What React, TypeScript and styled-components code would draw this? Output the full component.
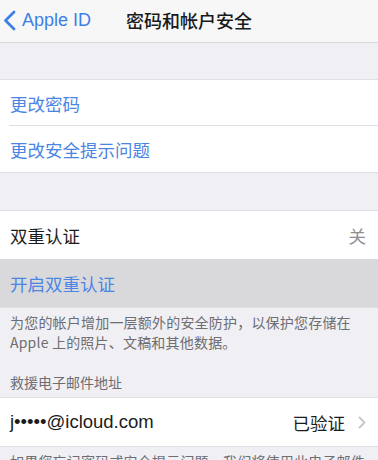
import React from "react";
import styled, { createGlobalStyle } from "styled-components";

const Global = createGlobalStyle`
  html, body { margin: 0; padding: 0; background: #efeff4; }
  body { font-family: "Liberation Sans", "Noto Sans CJK SC", sans-serif; -webkit-font-smoothing: antialiased; }
`;

const Page = styled.div`
  width: 378px;
  height: 460px;
  overflow: hidden;
  background: #efeff4;
  display: flex;
  flex-direction: column;
`;

const NavBar = styled.div`
  height: 42px;
  flex: none;
  background: #f7f7f8;
  border-bottom: 1px solid #d8d8dc;
  display: grid;
  grid-template-columns: 1fr auto 1fr;
  align-items: center;
`;

const Back = styled.div`
  display: flex;
  align-items: center;
  gap: 6px;
  padding-left: 3px;
  color: #3d7fe6;
  font-size: 18px;
  margin-top: -1px;
`;

const Title = styled.div`
  font-family: "Noto Sans CJK SC", sans-serif;
  font-size: 18px;
  font-weight: 500;
  color: #1a1a1a;
  margin-top: -2px;
`;

const Spacer = styled.div<{ h: number }>`
  height: ${(p) => p.h}px;
  flex: none;
`;

const Group = styled.div`
  background: #fff;
  border-top: 1px solid #e0e0e4;
  border-bottom: 1px solid #e0e0e4;
  display: flex;
  flex-direction: column;
  flex: none;
`;

const Row = styled.div<{ h: number; highlighted?: boolean; divider?: boolean }>`
  height: ${(p) => p.h}px;
  display: flex;
  align-items: center;
  justify-content: space-between;
  padding: 0 12px 0 10px;
  background: ${(p) => (p.highlighted ? "#d9d9db" : "#fff")};
  position: relative;
  ${(p) =>
    p.divider
      ? `&::after { content: ""; position: absolute; left: 9px; right: 0; bottom: 0; height: 1px; background: #e0e0e4; }`
      : ""}
`;

const Label = styled.span<{ blue?: boolean }>`
  font-family: "Noto Sans CJK SC", sans-serif;
  font-size: 17.5px;
  color: ${(p) => (p.blue ? "#4a85e4" : "#1c1c1c")};
`;

const Email = styled.span`
  font-family: "Liberation Sans", "Noto Sans CJK SC", sans-serif;
  font-size: 18.5px;
  color: #1c1c1c;
`;

const Value = styled.span<{ light?: boolean }>`
  display: flex;
  align-items: center;
  gap: 13px;
  font-family: "Noto Sans CJK SC", sans-serif;
  font-size: 17.5px;
  color: ${(p) => (p.light ? "#8e8e93" : "#1c1c1c")};
`;

const Footer = styled.div`
  padding: 4px 12px 0 10px;
  font-family: "Noto Sans CJK SC", sans-serif;
  font-size: 14px;
  line-height: 20px;
  color: #6d6d72;
  letter-spacing: 0.2px;
  flex: none;
`;

const Header = styled.div`
  padding: 20px 10px 5px;
  font-family: "Noto Sans CJK SC", sans-serif;
  font-size: 14px;
  line-height: 20px;
  color: #6d6d72;
  flex: none;
`;

const Chevron = () => (
  <svg width="13" height="21" viewBox="0 0 13 21">
    <path d="M11 2 L2.5 10.5 L11 19" fill="none" stroke="#3d7fe6" strokeWidth="2.8" strokeLinecap="round" strokeLinejoin="round" />
  </svg>
);

const Disclosure = () => (
  <svg width="8" height="13" viewBox="0 0 8 13">
    <path d="M1.5 1.5 L6.5 6.5 L1.5 11.5" fill="none" stroke="#c7c7cc" strokeWidth="1.8" strokeLinecap="round" strokeLinejoin="round" />
  </svg>
);

export default function App() {
  return (
    <Page>
      <Global />
      <NavBar>
        <Back>
          <Chevron />
          <span>Apple ID</span>
        </Back>
        <Title>密码和帐户安全</Title>
        <div />
      </NavBar>
      <Spacer h={36} />
      <Group>
        <Row h={46} divider>
          <Label blue>更改密码</Label>
        </Row>
        <Row h={46}>
          <Label blue>更改安全提示问题</Label>
        </Row>
      </Group>
      <Spacer h={37} />
      <Group>
        <Row h={48}>
          <Label>双重认证</Label>
          <Value light>关</Value>
        </Row>
        <Row h={48} highlighted>
          <Label blue>开启双重认证</Label>
        </Row>
      </Group>
      <Footer>
        为您的帐户增加一层额外的安全防护，以保护您存储在
        <br />
        Apple 上的照片、文稿和其他数据。
      </Footer>
      <Header>救援电子邮件地址</Header>
      <Group>
        <Row h={48}>
          <Email>j•••••@icloud.com</Email>
          <Value>
            已验证
            <Disclosure />
          </Value>
        </Row>
      </Group>
      <Footer>如果您忘记密码或安全提示问题，我们将使用此电子邮件地址</Footer>
    </Page>
  );
}
